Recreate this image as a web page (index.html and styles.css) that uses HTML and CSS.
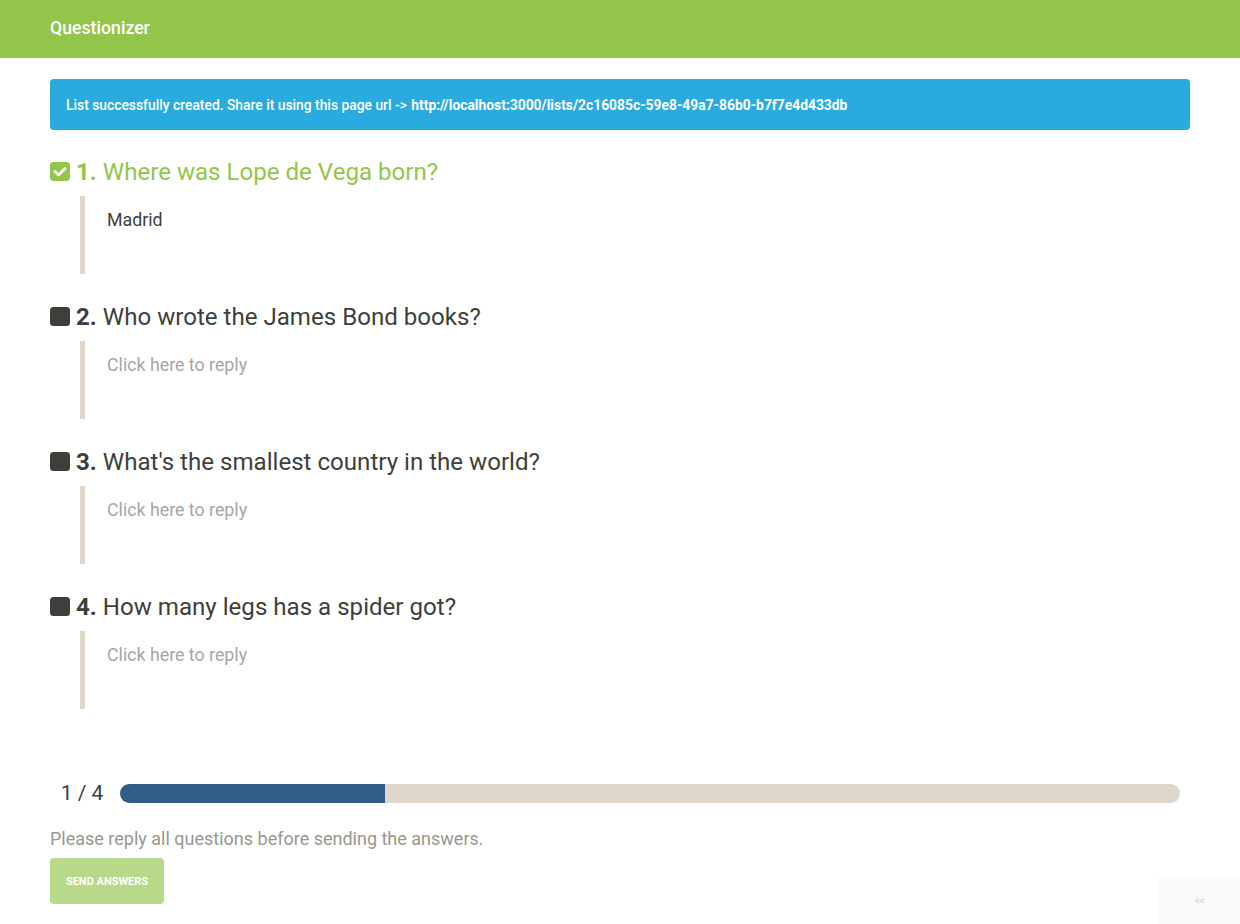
FILE: index.html
```html
<!DOCTYPE html>
<html lang="en">
<head>
<meta charset="utf-8">
<title>Questionizer</title>
<link rel="stylesheet" href="styles.css">
</head>
<body>
<header class="navbar">
  <span class="brand">Questionizer</span>
</header>
<main class="container">
  <div class="alert">
    <span>List successfully created. Share it using this page url -&gt; </span><a class="alert-link" href="#">http://localhost:3000/lists/2c16085c-59e8-49a7-86b0-b7f7e4d433db</a>
  </div>

  <section class="question done">
    <h3 class="q-title">
      <svg class="q-icon" viewBox="0 0 20 20"><rect x="0" y="0" width="20" height="19" rx="3.5" fill="#93c54b"/><path d="M5 9.6 L8.5 13 L15 6.4" fill="none" stroke="#fff" stroke-width="2.8" stroke-linecap="round" stroke-linejoin="round"/></svg>
      <span><b>1.</b> Where was Lope de Vega born?</span>
    </h3>
    <blockquote class="answer filled">Madrid</blockquote>
  </section>

  <section class="question">
    <h3 class="q-title">
      <svg class="q-icon" viewBox="0 0 20 20"><rect x="0" y="0" width="20" height="19" rx="3.5" fill="#3e3f3a"/></svg>
      <span><b>2.</b> Who wrote the James Bond books?</span>
    </h3>
    <blockquote class="answer">Click here to reply</blockquote>
  </section>

  <section class="question">
    <h3 class="q-title">
      <svg class="q-icon" viewBox="0 0 20 20"><rect x="0" y="0" width="20" height="19" rx="3.5" fill="#3e3f3a"/></svg>
      <span><b>3.</b> What's the smallest country in the world?</span>
    </h3>
    <blockquote class="answer">Click here to reply</blockquote>
  </section>

  <section class="question">
    <h3 class="q-title">
      <svg class="q-icon" viewBox="0 0 20 20"><rect x="0" y="0" width="20" height="19" rx="3.5" fill="#3e3f3a"/></svg>
      <span><b>4.</b> How many legs has a spider got?</span>
    </h3>
    <blockquote class="answer">Click here to reply</blockquote>
  </section>

  <div class="progress-row">
    <span class="progress-count">1 / 4</span>
    <div class="progress"><div class="progress-bar" style="width:25%"></div></div>
  </div>

  <p class="hint">Please reply all questions before sending the answers.</p>
  <button class="btn-send" disabled>SEND ANSWERS</button>
</main>
<div class="corner-tab">&lt;&lt;</div>
</body>
</html>
```

FILE: styles.css
```css
html, body {
  margin: 0;
  padding: 0;
}
body {
  font-family: Roboto, "Helvetica Neue", Arial, sans-serif;
  color: #3e3f3a;
  background: #fff;
  font-size: 14px;
}
.navbar {
  height: 58px;
  background: #93c54b;
  display: flex;
  align-items: center;
  padding-left: 50px;
}
.brand {
  color: #fff;
  font-size: 17.7px;
  font-weight: 500;
  margin-top: -3px;
}
.container {
  padding: 21px 50px 0 50px;
}
.alert {
  height: 51px;
  box-sizing: border-box;
  background: #29abe0;
  border-radius: 4px;
  color: #fff;
  font-size: 13.85px;
  font-weight: 500;
  display: flex;
  align-items: center;
  padding: 0 16px;
  white-space: pre;
}
.alert-link {
  color: #fff;
  font-weight: 700;
  text-decoration: none;
  margin-left: 1px;
}
.question {
  margin-top: 28px;
}
.question:first-of-type {
  margin-top: 27px;
}
.q-title {
  margin: 0;
  height: 30px;
  display: flex;
  align-items: center;
  gap: 6px;
  font-size: 24.1px;
  font-weight: 400;
  color: #3e3f3a;
}
.q-title b {
  font-weight: 700;
}
.done .q-title {
  color: #93c54b;
}
.q-icon {
  width: 20px;
  height: 20px;
  flex: none;
}
.answer {
  margin: 9px 0 0 30px;
  height: 78px;
  box-sizing: border-box;
  border-left: 5px solid #dfd7ca;
  padding: 11px 22px;
  font-size: 17.8px;
  line-height: 26px;
  color: #a6a6a6;
}
.answer.filled {
  color: #3e3f3a;
}
.progress-row {
  margin-top: 72px;
  display: flex;
  align-items: center;
  padding-right: 10px;
}
.progress-count {
  width: 70px;
  text-align: center;
  font-size: 21px;
  padding-right: 6px;
  box-sizing: border-box;
}
.progress {
  flex: 1;
  height: 19px;
  background: #dfd7ca;
  border-radius: 10px;
  overflow: hidden;
}
.progress-bar {
  height: 100%;
  background: #325d88;
}
.hint {
  margin: 23px 0 9px;
  font-size: 18px;
  color: #98978b;
}
.btn-send {
  width: 114px;
  height: 46px;
  border: none;
  border-radius: 4px;
  background: #93c54b;
  opacity: 0.65;
  color: #fff;
  font-family: Roboto, "Helvetica Neue", Arial, sans-serif;
  font-size: 11px;
  font-weight: 700;
  padding: 0;
}
.corner-tab {
  position: fixed;
  right: 0;
  bottom: 0;
  width: 81px;
  height: 47px;
  background: #fafafa;
  color: #cfe3ae;
  font-size: 10px;
  font-weight: 700;
  display: flex;
  align-items: center;
  justify-content: center;
}
```
